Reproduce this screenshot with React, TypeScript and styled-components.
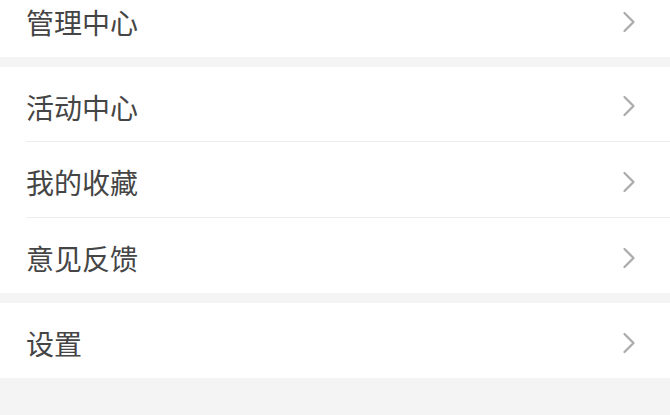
import styled, { createGlobalStyle } from "styled-components";

const GlobalStyle = createGlobalStyle`
  html, body {
    margin: 0;
    padding: 0;
    background: #f4f4f4;
    overflow: hidden;
  }
  body {
    font-family: "Noto Sans CJK SC", "Noto Sans", sans-serif;
  }
`;

const Page = styled.div`
  width: 670px;
  height: 415px;
  overflow: hidden;
  background: #f4f4f4;
`;

const Scroller = styled.div`
  margin-top: -18px;
  display: flex;
  flex-direction: column;
  gap: 10px;
`;

const Group = styled.ul`
  list-style: none;
  margin: 0;
  padding: 0 0 0 26px;
  background: #fff;
`;

const Row = styled.li<{ $last?: boolean }>`
  display: flex;
  align-items: center;
  justify-content: space-between;
  height: 75px;
  padding-right: 34px;
  border-bottom: ${(p) => (p.$last ? "none" : "1px solid #ededed")};
  &:first-child:not(:last-child) {
    height: 74px;
  }
`;

const Label = styled.span`
  font-size: 28px;
  line-height: 1;
  color: #454545;
  padding-top: 5px;
`;

const Chevron = () => (
  <svg width="14" height="22" viewBox="0 0 14 22" style={{ marginTop: 4 }}>
    <path
      d="M2.5 2 L11.5 11 L2.5 20"
      fill="none"
      stroke="#acacac"
      strokeWidth="2.3"
      strokeLinecap="round"
      strokeLinejoin="round"
    />
  </svg>
);

const groups = [["管理中心"], ["活动中心", "我的收藏", "意见反馈"], ["设置"]];

export default function App() {
  return (
    <Page>
      <GlobalStyle />
      <Scroller>
        {groups.map((items, gi) => (
          <Group key={gi}>
            {items.map((name, i) => (
              <Row key={name} $last={i === items.length - 1}>
                <Label>{name}</Label>
                <Chevron />
              </Row>
            ))}
          </Group>
        ))}
      </Scroller>
    </Page>
  );
}
